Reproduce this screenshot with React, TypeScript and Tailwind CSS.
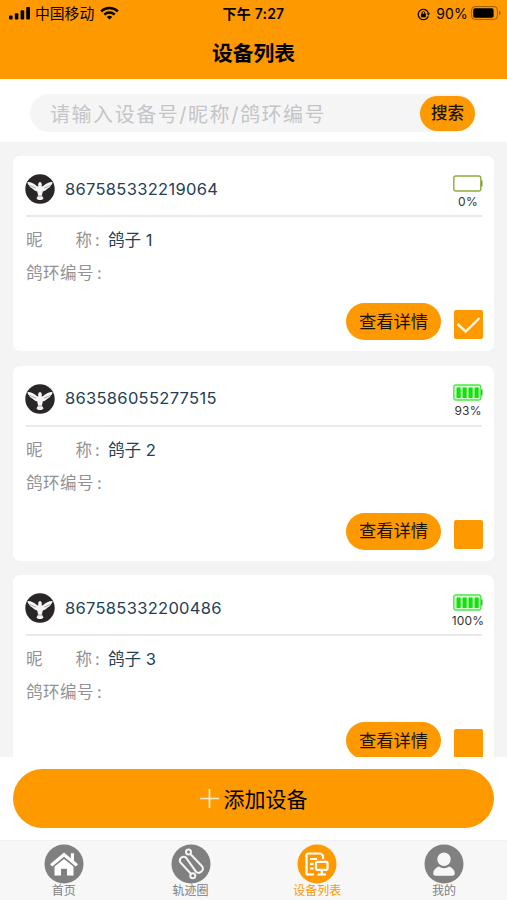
import { useState, type ReactNode } from 'react'
import clsx from 'clsx'

type Device = {
  imei: string
  nickname: string
  battery: number
}

const devices: Device[] = [
  { imei: '867585332219064', nickname: '鸽子 1', battery: 0 },
  { imei: '863586055277515', nickname: '鸽子 2', battery: 93 },
  { imei: '867585332200486', nickname: '鸽子 3', battery: 100 },
]

function StatusBar() {
  return (
    <div className="grid h-[27px] grid-cols-[1fr_auto_1fr] items-center pt-px text-[14px] leading-none">
      <div className="flex items-center pl-[9px]">
        <svg className="-mt-0.5" width={22} height={14} viewBox="0 0 22 14">
          <rect x={0} y={9.5} width={3.6} height={4} rx={1} />
          <rect x={5.8} y={7.3} width={3.6} height={6.2} rx={1} />
          <rect x={11.6} y={4.3} width={3.6} height={9.2} rx={1} />
          <rect x={17.2} y={1} width={3.8} height={12.5} rx={1} />
        </svg>
        <span className="ml-1 text-[14.8px]">中国移动</span>
        <svg className="-mt-0.5 ml-[6px]" width={19} height={14} viewBox="0 0 19 14">
          <path d="M1.2 5.3a12 12 0 0 1 16.6 0" fill="none" stroke="#000" strokeWidth={2.5} />
          <path d="M4.3 8.6a7.5 7.5 0 0 1 10.4 0" fill="none" stroke="#000" strokeWidth={2.3} />
          <path d="M9.5 13.6 6.8 10.9a4 4 0 0 1 5.4 0z" />
        </svg>
      </div>
      <span className="text-[14px] font-semibold tracking-[0.2px]">下午 7:27</span>
      <div className="flex items-center justify-end pr-[6px]">
        <svg width={13} height={13} viewBox="0 0 13 13">
          <path d="M11.3 8.2a5.2 5.2 0 1 1 .1-3.1" fill="none" stroke="#000" strokeWidth={1.2} />
          <path d="M9.6 5.2h3.4l-1.5 2.6z" />
          <rect x={4} y={5.8} width={4.8} height={3.5} rx={0.5} />
          <path d="M5 6V5a1.4 1.4 0 0 1 2.8 0v1" fill="none" stroke="#000" strokeWidth={0.9} />
        </svg>
        <span className="ml-[6px] text-[14px] tracking-[0.2px]">90%</span>
        <svg className="-mt-0.5 ml-[3px]" width={30} height={14} viewBox="0 0 30 14">
          <rect x={0.6} y={0.6} width={25.8} height={12.8} rx={3.4} fill="none" stroke="#000" strokeOpacity={0.4} />
          <rect x={2.2} y={2.3} width={20.4} height={9.4} rx={1.8} />
          <path d="M28 4.9v4.2c1-.4 1.6-1.2 1.6-2.1S29 5.3 28 4.900z" fillOpacity={0.4} />
        </svg>
      </div>
    </div>
  )
}

function BirdLogo() {
  return (
    <svg width={30} height={30} viewBox="0 0 30 30">
      <circle cx={15} cy={15} r={14.7} fill="#2a2526" />
      <path
        d="M2.500 8c3.300-.2 6.800 1.600 9.600 4.200l1.200.2c-.4-2.200 0-3.900 1.700-4.400 1.700.5 2.100 2.200 1.700 4.400l1.200-.2C20.700 9.600 24.200 7.800 27.500 8c0 1.400-.6 2.600-1.700 3.400-.5 1.300-1.500 2.300-2.800 2.800-1.500 1.600-3.200 2.600-5.200 3.200l-.9 4 1.600 3.100c-.9 1-2 1.500-3.500 1.500s-2.600-.5-3.500-1.500l1.600-3.100-.9-4c-2-.6-3.700-1.600-5.200-3.200-1.300-.5-2.300-1.500-2.800-2.800C3.100 10.600 2.500 9.400 2.500 8z"
        fill="#f5f5f5"
      />
      <path d="M4.800 11.500l6.200 2.700M25.200 11.500l-6.200 2.700M13 22h4" stroke="#8b8788" strokeWidth={0.7} />
    </svg>
  )
}

function Battery({ level }: { level: number }) {
  const empty = level === 0
  return (
    <div className="-mr-[5px] flex w-[38px] flex-col items-center">
      <svg width={30} height={17} viewBox="0 0 30 17">
        <rect
          x={0.8}
          y={1}
          width={27}
          height={15}
          rx={2}
          fill={empty ? '#fff' : '#d2ffd0'}
          stroke={empty ? '#91aa3e' : '#4ee848'}
          strokeWidth={1.4}
        />
        <path d="M28 5.5h1.5v6H28z" fill={empty ? '#7f9a2c' : '#22c81c'} />
        {!empty && [3.5, 9.5, 15.5, 21.5].map(x => <rect key={x} x={x} y={3.5} width={4.2} height={10.5} fill="#16df10" />)}
      </svg>
      <span className="mt-[3px] text-[12px] leading-[14px] tracking-[0.2px] text-[#333]">{level}%</span>
    </div>
  )
}

function DeviceCard({ device, checked, onToggle }: { device: Device; checked: boolean; onToggle: () => void }) {
  return (
    <div className="flex h-[195px] shrink-0 flex-col rounded-[7px] bg-white pr-3 pl-[13px]">
      <div className="flex h-[61px] items-center border-b-2 border-[#e9e9e9] pt-[7px]">
        <div className="-ml-[1px]">
          <BirdLogo />
        </div>
        <span className="ml-[10px] text-[16.5px] tracking-[0.3px] text-[#244056]">{device.imei}</span>
        <div className="mt-[5px] ml-auto">
          <Battery level={device.battery} />
        </div>
      </div>
      <div className="mt-[7px] flex h-[33px] items-center text-[16.5px] text-[#929296]">
        <div className="flex w-[66px] justify-between">
          <span>昵</span>
          <span>称</span>
        </div>
        <span className="ml-[3px] w-[13px]">:</span>
        <span className="text-[#244056]">{device.nickname}</span>
      </div>
      <div className="flex h-[33px] items-center text-[16.5px] tracking-[0.5px] text-[#929296]">
        鸽环编号<span className="ml-[3px]">:</span>
      </div>
      <div className="mt-[13px] flex items-start justify-end">
        <button className="h-[37px] w-[95px] rounded-full bg-[#ff9900] text-[17.3px] text-[#1c1305]">查看详情</button>
        <button
          onClick={onToggle}
          aria-label={device.nickname}
          className="mt-[7px] -mr-px ml-[13px] flex size-[29px] items-center justify-center rounded-[2px] bg-[#ff9900]"
        >
          {checked && (
            <svg width={25} height={18} viewBox="0 0 25 18">
              <path d="M1.5 8l8.2 7.5L23.5 2" fill="none" stroke="#fff8e4" strokeWidth={2.4} />
            </svg>
          )}
        </button>
      </div>
    </div>
  )
}

const tabs: { label: string; active?: boolean; icon: ReactNode }[] = [
  {
    label: '首页',
    icon: (
      <g fill="#fff">
        <path d="M20 8.5 6 20.2l2.2 2.3L20 12.8l11.8 9.7 2.2-2.3-4-3.4V9.2h-3.2v5.1z" />
        <path d="M20 14.9l-9.5 7.7v8.8H17v-6.6h6v6.6h6.5v-8.8z" />
      </g>
    ),
  },
  {
    label: '轨迹圈',
    icon: (
      <g fill="none" stroke="#f4f4f4" strokeWidth={2} strokeLinecap="round">
        <circle cx={17.5} cy={8} r={2.5} />
        <circle cx={21.8} cy={31.7} r={2.5} />
        <path d="M19.4 10 31 22.2a4.100 4.100 0 0 1-6 5.500L15.200 13.800a3.800 3.800 0 0 0-6 4.400l10.700 11.600" />
      </g>
    ),
  },
  {
    label: '设备列表',
    active: true,
    icon: (
      <g fill="none" stroke="#fff" strokeWidth={2.2} strokeLinejoin="round">
        <path d="M26 15V11.5L23.5 9.5H11A1.5 1.5 0 0 0 9.500 11v18a1.500 1.500 0 0 0 1.500 1.500H17" />
        <path d="M13 15h7M13 19.8h3.5M13 24.5h3.5" />
        <rect x={19} y={17.8} width={11.5} height={8} rx={1} />
        <path d="M24.800 26v4M20.500 30.500h8.500" />
      </g>
    ),
  },
  {
    label: '我的',
    icon: (
      <g fill="#f7f7f7">
        <circle cx={20} cy={15.2} r={6.7} />
        <path d="M15 22.500c3 2.300 7 2.300 10 0 3.500 1 5.600 3.800 5.800 6.800.1 1.600-.8 2.400-2.400 2.400H11.600c-1.600 0-2.500-.8-2.400-2.400.2-3 2.300-5.800 5.800-6.800z" />
      </g>
    ),
  },
]

export default function App() {
  const [selected, setSelected] = useState<string[]>([devices[0].imei])

  const toggle = (imei: string) =>
    setSelected(prev => (prev.includes(imei) ? prev.filter(i => i !== imei) : [...prev, imei]))

  return (
    <div className="flex h-[900px] w-[507px] flex-col overflow-hidden bg-[#f4f4f4] font-['Inter','Noto_Sans_CJK_SC',sans-serif] text-black">
      <header className="h-[79px] shrink-0 bg-[#ff9900]">
        <StatusBar />
        <h1 className="flex h-[52px] items-center justify-center pt-[2px] text-[20.8px] font-semibold">设备列表</h1>
      </header>

      {/* Search */}
      <div className="flex h-[63px] shrink-0 items-center bg-white pr-8 pl-[30px]">
        <div className="mt-[5px] flex h-[38px] w-full items-center rounded-full bg-[#f5f5f5] pl-[20px]">
          <input
            placeholder="请输入设备号/昵称/鸽环编号"
            className="min-w-0 flex-1 bg-transparent pt-[3px] text-[20px] tracking-[1.55px] outline-none placeholder:text-[#c3c5c9]"
          />
          <button className="h-[35px] w-[55px] shrink-0 rounded-full bg-[#ff9900] pt-px text-[16.5px] font-medium text-[#1c1305]">
            搜索
          </button>
        </div>
      </div>

      {/* Device list */}
      <main className="flex min-h-0 flex-1 flex-col gap-[14.5px] overflow-hidden px-[13px] pt-[14px]">
        {devices.map(device => (
          <DeviceCard
            key={device.imei}
            device={device}
            checked={selected.includes(device.imei)}
            onToggle={() => toggle(device.imei)}
          />
        ))}
      </main>

      <div className="h-[83px] shrink-0 bg-white px-[13px] pt-[12px]">
        <button className="flex h-[59px] w-full items-center justify-center gap-[5px] rounded-full bg-[#ff9900] text-[21px]">
          <svg width={19} height={19} viewBox="0 0 19 19">
            <path d="M9.5 0v19M0 9.5h19" stroke="#ffefca" strokeWidth={1.7} />
          </svg>
          <span className="pt-[2px]">添加设备</span>
        </button>
      </div>

      {/* Tab bar */}
      <nav className="grid h-[60px] shrink-0 grid-cols-4 border-t border-[#f0f0f0] bg-[#f7f7f7]">
        {tabs.map(tab => (
          <a key={tab.label} className="flex flex-col items-center pt-[3px] pl-px">
            <svg className="shrink-0" width={40} height={40} viewBox="0 0 40 40">
              <circle cx={20} cy={20} r={19.5} fill={tab.active ? '#ff9900' : '#808080'} />
              {tab.icon}
            </svg>
            <span className={clsx('text-[12px] leading-[14px]', tab.active ? 'text-[#ff9900]' : 'text-[#808080]')}>
              {tab.label}
            </span>
          </a>
        ))}
      </nav>
    </div>
  )
}
